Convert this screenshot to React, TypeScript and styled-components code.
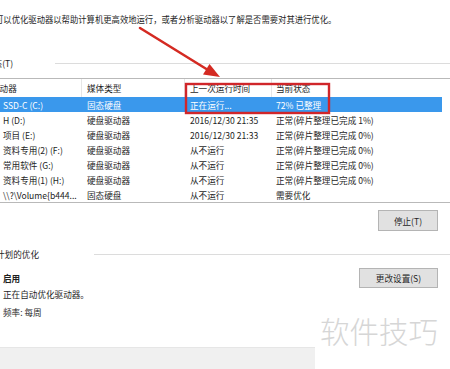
import React from 'react';
import styled, { createGlobalStyle } from 'styled-components';

const Global = createGlobalStyle`
  html, body { margin: 0; padding: 0; background: #fff; }
  body {
    width: 450px; height: 369px; overflow: hidden;
    font-family: "Noto Sans CJK SC", "Noto Sans", sans-serif;
    font-size: 8.6px; color: #1e1e1e;
  }
`;

const Page = styled.div`
  position: relative;
  width: 450px;
  height: 369px;
  overflow: hidden;
  display: flex;
  flex-direction: column;
`;

const Intro = styled.p`
  margin: 14px 0 0 -5px;
  font-size: 9px;
  line-height: 12px;
  white-space: nowrap;
  transform: scaleX(0.925);
  transform-origin: left center;
`;

const SectionHeader = styled.div<{ $top: number; $lineStart: number }>`
  display: flex;
  align-items: center;
  height: 12px;
  margin-top: ${p => p.$top}px;
  & > span { white-space: nowrap; }
  &::after {
    content: '';
    flex: 1;
    height: 1px;
    background: #dcdcdc;
    margin-left: ${p => p.$lineStart}px;
  }
`;

const SectionLabel = styled.span<{ $shift: number }>`
  margin-left: ${p => p.$shift}px;
  line-height: 12px;
`;

const Table = styled.div`
  margin-top: 9px;
  border-top: 1px solid #b9b9b9;
  border-bottom: 1px solid #b9b9b9;
  width: 450px;
`;

const Row = styled.div<{ $selected?: boolean; $header?: boolean }>`
  display: grid;
  grid-template-columns: 82px 103px 87px 1fr;
  width: 442px;
  height: ${p => (p.$header ? 18 : 15)}px;
  align-items: center;
  background: ${p => (p.$selected ? '#3a98ec' : 'transparent')};
  color: ${p => (p.$selected ? '#ffffff' : '#1e1e1e')};
`;

const Cell = styled.div<{ $pad: number; $divider?: boolean }>`
  padding-left: ${p => p.$pad}px;
  white-space: nowrap;
  overflow: visible;
  height: 100%;
  display: flex;
  align-items: center;
  border-right: ${p => (p.$divider ? '1px solid #e6e6e6' : 'none')};
  box-sizing: border-box;
`;

const ClippedHead = styled.span`
  margin-left: -12px;
`;

const ButtonRow = styled.div<{ $top: number }>`
  display: flex;
  justify-content: space-between;
  align-items: center;
  margin-top: ${p => p.$top}px;
  padding: 0 12px 0 3px;
`;

const Button = styled.div<{ $w: number; $h: number }>`
  width: ${p => p.$w}px;
  height: ${p => p.$h}px;
  box-sizing: border-box;
  background: #e1e1e1;
  border: 1px solid #b4b4b4;
  display: flex;
  align-items: center;
  justify-content: center;
  margin-left: auto;
`;

const Strong = styled.span`
  font-weight: 700;
`;

const InfoLine = styled.div`
  padding-left: 3px;
  line-height: 18px;
  white-space: nowrap;
`;

const FirstInfo = styled(InfoLine)`
  margin-top: -3px;
`;

const Footer = styled.div`
  margin-top: auto;
  height: 21px;
  width: 315px;
  background: #f0f0f0;
  border-top: 1px solid #e6e6e6;
`;

const Watermark = styled.div`
  position: absolute;
  right: 0;
  bottom: 0;
  width: 135px;
  height: 56px;
  background: #fff;
  color: #d6d6d6;
  font-size: 29.5px;
  font-weight: 300;
  line-height: 30px;
  padding: 2px 0 0 5px;
  box-sizing: border-box;
  white-space: nowrap;
`;

const Overlay = styled.svg`
  position: absolute;
  left: 0;
  top: 0;
  width: 450px;
  height: 369px;
  pointer-events: none;
`;

const rows = [
  ['SSD-C (C:)', '固态硬盘', '正在运行...', '72% 已整理'],
  ['H (D:)', '硬盘驱动器', '2016/12/30 21:35', '正常(碎片整理已完成 1%)'],
  ['项目 (E:)', '硬盘驱动器', '2016/12/30 21:33', '正常(碎片整理已完成 0%)'],
  ['资料专用(2) (F:)', '硬盘驱动器', '从不运行', '正常(碎片整理已完成 0%)'],
  ['常用软件 (G:)', '硬盘驱动器', '从不运行', '正常(碎片整理已完成 0%)'],
  ['资料专用(1) (H:)', '硬盘驱动器', '从不运行', '正常(碎片整理已完成 0%)'],
  ['\\\\?\\Volume{b444...', '固态硬盘', '从不运行', '需要优化'],
];

export default function App() {
  return (
    <>
      <Global />
      <Page>
        <Intro>可以优化驱动器以帮助计算机更高效地运行，或者分析驱动器以了解是否需要对其进行优化。</Intro>
        <SectionHeader $top={31} $lineStart={42}>
          <SectionLabel $shift={-15}>状态(T)</SectionLabel>
        </SectionHeader>
        <Table>
          <Row $header>
            <Cell $pad={3} $divider><ClippedHead>驱动器</ClippedHead></Cell>
            <Cell $pad={5} $divider>媒体类型</Cell>
            <Cell $pad={5} $divider>上一次运行时间</Cell>
            <Cell $pad={4}>当前状态</Cell>
          </Row>
          {rows.map((r, i) => (
            <Row key={i} $selected={i === 0}>
              <Cell $pad={3}>{r[0]}</Cell>
              <Cell $pad={5}>{r[1]}</Cell>
              <Cell $pad={5}>{r[2]}</Cell>
              <Cell $pad={4}>{r[3]}</Cell>
            </Row>
          ))}
        </Table>
        <ButtonRow $top={7}>
          <Button $w={60} $h={21}>停止(T)</Button>
        </ButtonRow>
        <SectionHeader $top={17} $lineStart={55}>
          <SectionLabel $shift={-4}>计划的优化</SectionLabel>
        </SectionHeader>
        <ButtonRow $top={8}>
          <Strong>启用</Strong>
          <Button $w={79} $h={20}>更改设置(S)</Button>
        </ButtonRow>
        <FirstInfo>正在自动优化驱动器。</FirstInfo>
        <InfoLine>频率: 每周</InfoLine>
        <Footer />
        <Watermark>软件技巧</Watermark>
        <Overlay viewBox="0 0 450 369">
          <line x1="140" y1="28" x2="208" y2="70" stroke="#d42a22" strokeWidth="2.6" strokeLinecap="round" />
          <polygon points="220,77 203,74.5 209.5,64" fill="#d42a22" />
          <rect x="186" y="84" width="143" height="29" fill="none" stroke="#d0262a" strokeWidth="2.4" />
        </Overlay>
      </Page>
    </>
  );
}
